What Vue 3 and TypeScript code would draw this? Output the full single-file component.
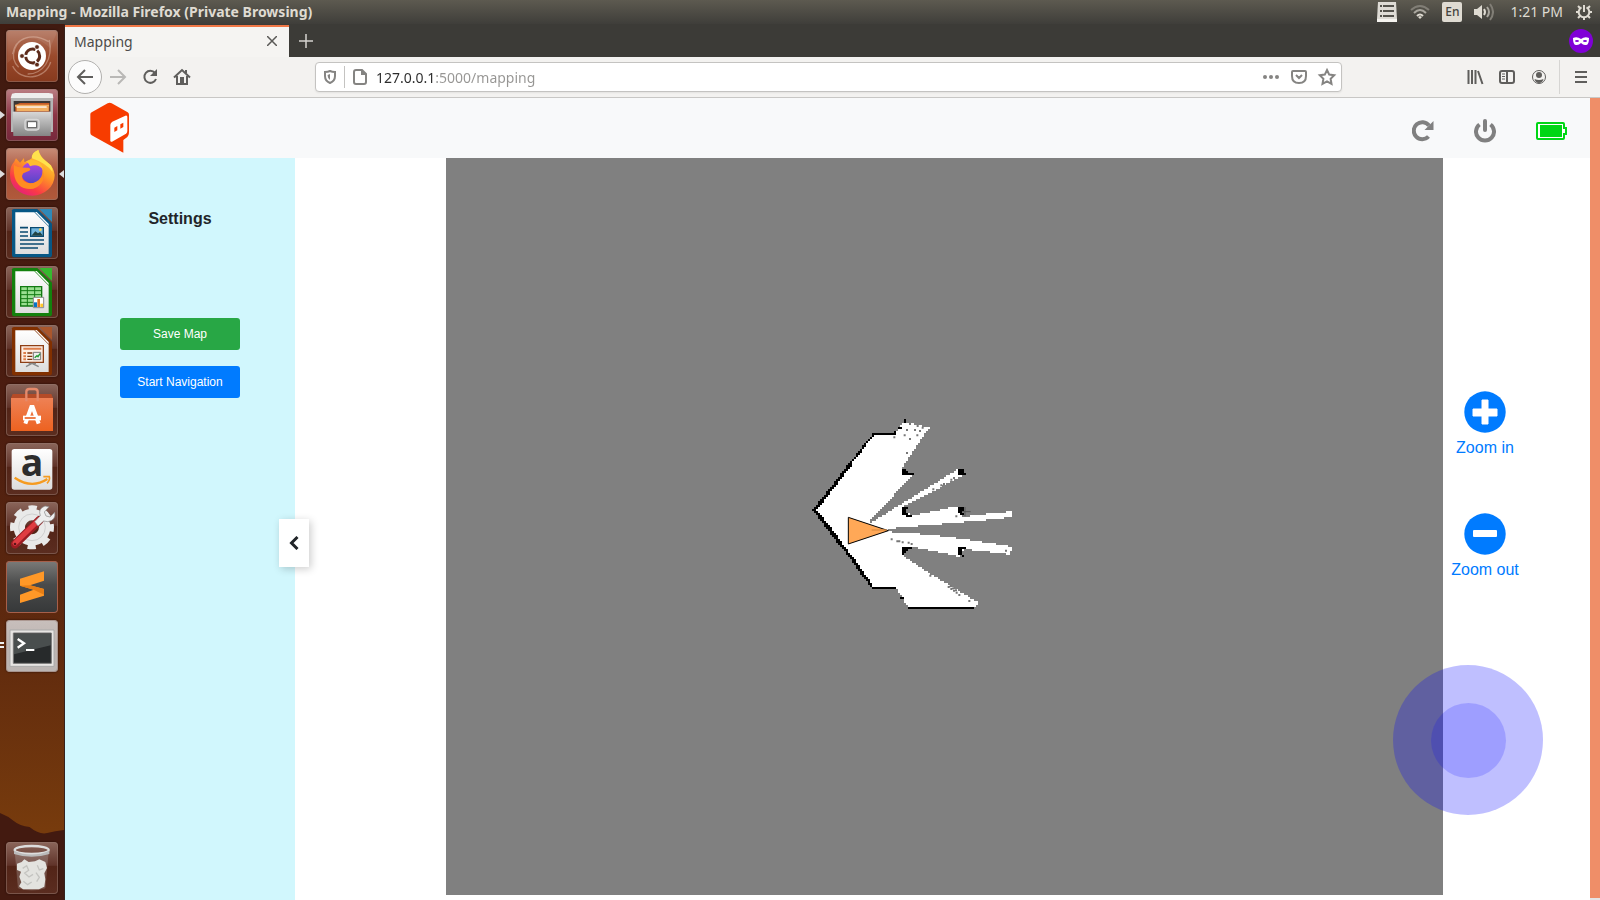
<script setup lang="ts">
import { ref } from 'vue'

type Point = [number, number]

const address = ref('127.0.0.1:5000/mapping')

/* Occupancy grid: survey outlines are sampled into square cells. */
const CELL = 6
const COLS = 115
const ROWS = 108

const free: Point[][] = [
  [[40, 315], [222, 88], [285, 88], [310, 50], [388, 68], [303, 192], [318, 208], [336, 212], [208, 350], [215, 352], [475, 192], [495, 208],
   [305, 308], [335, 333], [475, 303], [492, 325], [480, 337], [545, 328], [637, 319], [637, 336], [570, 344], [265, 371], [262, 380], [400, 390], [490, 402], [637, 425],
   [628, 451], [612, 446], [493, 432], [480, 456], [420, 442], [330, 424], [306, 450], [380, 500], [537, 594],
   [520, 608], [325, 608], [287, 547], [220, 547]],
]

const walls: Point[][] = [
  [[41, 315], [100, 240], [148, 178], [178, 142], [203, 108], [224, 86], [283, 86]],
  [[47, 312], [104, 240], [150, 182]],
  [[41, 315], [98, 388], [148, 452], [198, 522], [218, 547], [285, 547]],
  [[48, 318], [104, 388], [154, 456], [204, 526]],
  [[326, 609], [520, 609]],
  [[296, 68], [302, 68]], [[312, 46], [316, 50]], [[282, 80], [286, 86]],
  [[306, 192], [306, 206], [340, 208]], [[312, 194], [324, 204]], [[312, 200], [318, 202]],
  [[476, 192], [476, 204]], [[482, 192], [482, 204]], [[486, 196], [488, 202], [494, 208]],
  [[306, 310], [306, 322], [316, 328], [334, 334]], [[312, 310], [318, 306]], [[312, 314], [312, 324], [324, 330]],
  [[476, 306], [490, 306]], [[482, 306], [482, 324]], [[476, 320], [488, 328]], [[476, 312], [488, 316]],
  [[306, 448], [306, 430], [332, 426]], [[312, 438], [312, 430], [320, 432]],
  [[478, 444], [478, 430], [494, 426]], [[482, 432], [482, 444], [488, 455]],
  [[304, 576], [306, 578]],
]

const specks: Point[] = [
  [330, 57], [353, 63], [368, 68], [321, 75], [345, 75], [360, 78], [314, 91], [352, 91], [330, 102], [283, 97],
  [321, 144], [400, 253], [424, 241], [432, 237], [454, 224], [462, 219], [469, 334], [275, 403], [292, 409],
  [298, 409], [308, 412], [326, 413], [335, 417], [618, 437], [391, 512], [446, 546], [454, 552], [462, 557], [470, 563], [478, 570], [452, 544],
  [460, 550], [468, 556], [508, 588],
]

function inside(x: number, y: number, poly: Point[]): boolean {
  let hit = false
  for (let i = 0, j = poly.length - 1; i < poly.length; j = i++) {
    const [xi, yi] = poly[i]
    const [xj, yj] = poly[j]
    if (yi > y !== yj > y && x < ((xj - xi) * (y - yi)) / (yj - yi) + xi) hit = !hit
  }
  return hit
}

function freePath(): string {
  let d = ''
  for (let r = 0; r < ROWS; r++) {
    let start = -1
    for (let c = 0; c <= COLS; c++) {
      const on = c < COLS && free.some((p) => inside((c + 0.5) * CELL, (r + 0.5) * CELL, p))
      if (on && start < 0) start = c
      if (!on && start >= 0) {
        d += `M${start * CELL} ${r * CELL}h${(c - start) * CELL}v${CELL}h${(start - c) * CELL}z`
        start = -1
      }
    }
  }
  return d
}

function wallPath(): string {
  const cells = new Set<string>()
  for (const line of walls) {
    for (let i = 1; i < line.length; i++) {
      const [x0, y0] = line[i - 1]
      const [x1, y1] = line[i]
      const n = Math.max(1, Math.ceil(Math.max(Math.abs(x1 - x0), Math.abs(y1 - y0)) / 3))
      for (let k = 0; k <= n; k++) {
        const c = Math.floor((x0 + ((x1 - x0) * k) / n) / CELL)
        const r = Math.floor((y0 + ((y1 - y0) * k) / n) / CELL)
        cells.add(`M${c * CELL} ${r * CELL}h${CELL}v${CELL}h-${CELL}z`)
      }
    }
  }
  return [...cells].join('')
}

const freeCells = freePath()
const wallCells = wallPath()
const speckCells = specks.map(([x, y]) => `M${x - 3} ${y - 3}h6v6h-6z`).join('')

const dock = [
  { id: 'dash', label: 'Search your computer' },
  { id: 'files', label: 'Files', running: 1 },
  { id: 'firefox', label: 'Firefox', running: 1, focused: true },
  { id: 'writer', label: 'LibreOffice Writer' },
  { id: 'calc', label: 'LibreOffice Calc' },
  { id: 'impress', label: 'LibreOffice Impress' },
  { id: 'software', label: 'Ubuntu Software' },
  { id: 'amazon', label: 'Amazon' },
  { id: 'system', label: 'System Settings' },
  { id: 'sublime', label: 'Sublime Text' },
  { id: 'terminal', label: 'Terminal', running: 2 },
  { id: 'trash', label: 'Trash' },
]
</script>

<template>
  <div class="desktop">
    <header class="panel">
      <span class="panel-title">Mapping - Mozilla Firefox (Private Browsing)</span>
      <div class="tray">
        <svg width="22" height="20" viewBox="0 0 22 20"><path d="M2 0h18l1 17v3H1v-3z" fill="#dedbd5" /><path d="M1 17h20v3H1z" fill="#f5f3ef" /><path d="M4 4h2M7 4h11M4 9h2M7 9h11M4 14h2M7 14h11" stroke="#54524c" stroke-width="2" /></svg>
        <svg class="wifi" width="20" height="16" viewBox="0 0 20 16" fill="none" stroke-width="2"><path d="M1 6q9-8 18 0" stroke="#817e76" /><path d="M4 9q6-6 12 0" stroke="#aaa79f" /><path d="M7 12q3-3 6 0" stroke="#dfdbd2" /><path d="m8 13 2 2 2-2-2-1z" fill="#dfdbd2" /></svg>
        <span class="lang">En</span>
        <svg class="vol" width="20" height="18" viewBox="0 0 20 18" fill="none"><path d="M0 6h3l5-4v14l-5-4H0z" fill="#dfdbd2" /><path d="M10 6q2 3 0 6" stroke="#dfdbd2" stroke-width="2" /><path d="M13 4q4 5 0 10" stroke="#aaa79f" stroke-width="2" /><path d="M16 1q6 8 0 16" stroke="#817e76" stroke-width="2" /></svg>
        <time class="clock">1:21 PM</time>
        <svg width="16" height="16" viewBox="0 0 16 16" fill="none" stroke="#dfdbd2"><path d="M5.500 3.300A5.300 5.300 0 1 0 10.500 3.300M8 1v7" stroke-width="2" /><path d="M2 2l2.500 2.500M14 2l-2.500 2.500M0 8h3M13 8h3M2 14l2.500-2.500M14 14l-2.500-2.500M8 13v3" stroke-width="2" /></svg>
      </div>
    </header>

    <div class="workspace">
      <nav class="dock" aria-label="Launcher">
        <svg class="hill" viewBox="0 0 65 90" preserveAspectRatio="none"><path d="M0 3Q8 6 14 11T30 17Q40 25 48 23T65 20V90H0z" fill="#431a10" /></svg>
        <button v-for="app in dock" :key="app.id" type="button" class="app" :class="app.id" :aria-label="app.label">
          <i v-if="app.running === 1" class="pip"></i>
          <template v-if="app.running === 2"><i class="bar up"></i><i class="bar down"></i></template>
          <i v-if="app.focused" class="pip-right"></i>
          <svg width="52" height="52" viewBox="0 0 156 156">
            <g v-if="app.id === 'dash'">
              <g fill="none" stroke="#e6c5b4" stroke-width="4" opacity=".45"><path d="M20 72C28 25 78 5 128 35M130 30C142 90 110 132 65 132M38 112C5 80 30 28 65 22M20 108C42 156 118 150 134 96" /></g>
              <path d="M20 85C18 35 75-5 132 55L152 10V0H4v100z" fill="#fff" opacity=".08" />
              <circle cx="78" cy="78" r="42" fill="#fff" />
              <circle cx="80" cy="78" r="21" fill="none" stroke="#5d2b1b" stroke-width="9" stroke-dasharray="38 6" stroke-dashoffset="-25" />
              <g fill="#5d2b1b" stroke="#fff" stroke-width="2"><circle cx="48" cy="78" r="7" /><circle cx="93" cy="51" r="7" /><circle cx="93" cy="104" r="7" /></g>
            </g>
            <g v-else-if="app.id === 'files'">
              <path d="m18 14 10-2h100l12 2 2 14H14z" fill="#eee" /><path d="M15 27h126v102H15z" fill="#b5b5b5" />
              <path d="M23 36h110v32H23z" fill="#3c3735" /><path d="M28 48l14-6h88v26H28z" fill="#c85d26" /><path d="M27 47h102v6H27zM32 54h96v12H32z" fill="#f2b062" /><path d="M32 54h90" stroke="#fff" stroke-width="4" />
              <path d="M20 68h116l-2 73H22z" fill="url(#steel)" /><rect x="57" y="91" width="42" height="32" rx="8" fill="#b9b9b9" stroke="#d8d8d8" stroke-width="4" /><path d="M64 98h28v18H64z" fill="#fff" stroke="#555" stroke-width="3" />
            </g>
            <g v-else-if="app.id === 'firefox'">
              <path d="M12 78Q12 54 24 42L30 31 42 44 54 30 55 42Q68 39 77 31 77 15 97 6q5 20 22 32 26 20 27 43a67 62 0 0 1-134 0z" fill="url(#fox)" />
              <path d="M78 31Q76 13 97 6q5 21 22 33l16 13q5 8 5 20-21-27-62-41" fill="#ffe24d" />
              <circle cx="78" cy="74" r="32" fill="url(#globe)" />
              <path d="M24 50q8 10 44 9 10 4 0 10l-16 7q-9 12 2 23 17 13 36 2 20-10 20-33 9 20-4 38-20 25-53 14-34-15-29-70" fill="#ff8c22" />
              <path d="M60 40q16-8 32 0 15 4 19 23-18-18-39-8-4-9-12-15" fill="#ffbc30" />
            </g>
            <g v-else-if="['writer', 'calc', 'impress'].includes(app.id)">
              <path d="M18 10Q18 6 26 6h68l44 44v93q0 8-8 8H26q-8 0-8-8z" :fill="app.id === 'writer' ? '#075785' : app.id === 'calc' ? '#13810d' : '#823000'" />
              <path d="M100 6h38v39z" :fill="app.id === 'writer' ? '#2f89b8' : app.id === 'calc' ? '#36b92f' : '#aa562c'" />
              <path d="M28 16h57l43 43v82H28z" fill="url(#paper)" /><path d="m87 15 41 42v-6L92 15z" fill="#fff" />
              <g v-if="app.id === 'writer'"><path d="M42 62h24M42 75h24M42 87h24M42 99h72M42 111h72M42 123h54" stroke="#0a4a70" stroke-width="5" /><path d="M74 62h38v26H74z" fill="#73b7de" stroke="#0a4a70" stroke-width="4" /><path d="m76 86 12-13 8 6 6-4 9 11z" fill="#244" /><circle cx="103" cy="68" r="4" fill="#ffd84e" /></g>
              <g v-else-if="app.id === 'calc'"><path d="M44 62h63v58H44z" fill="#9adf91" stroke="#127a12" stroke-width="4" /><path d="M44 74h63M44 86h63M44 98h63M44 109h63M64 62v58M86 62v58" stroke="#127a12" stroke-width="3" /><path d="M82 94h31v31H82z" fill="#fff" stroke="#888" stroke-width="3" /><path d="M84 109h9v14h-9z" fill="#0874c7" /><path d="M94 99h8v24h-8z" fill="#e47220" /><path d="M103 113h8v10h-8z" fill="#ffc82b" /></g>
              <g v-else><path d="M44 62h68v50H44z" fill="#fdeee4" stroke="#8e3e15" stroke-width="4" /><path d="M52 71h54M52 84h8M52 94h8M52 103h8" stroke="#dd7e4b" stroke-width="6" /><path d="M64 84h15M64 94h15M64 103h15" stroke="#7d350e" stroke-width="4" /><path d="M82 82h22v22H82z" fill="#eee" stroke="#777" stroke-width="3" /><path d="m86 98 7-6 3 3 6-9" stroke="#219a31" stroke-width="4" fill="none" /><path d="m60 125 18-10 20 10M68 115h22" stroke="#888" stroke-width="4" fill="none" /></g>
            </g>
            <g v-else-if="app.id === 'software'">
              <path d="m15 42 5-12h116l5 12z" fill="#b44b27" /><path d="M15 42h126v99H15z" fill="url(#bag)" />
              <path d="M61 52V23q0-8 9-8h16q9 0 9 8v29" fill="none" stroke="#e58a6b" stroke-width="7" />
              <path d="M58 119 76 69h4l18 50" fill="none" stroke="#fff" stroke-width="12" /><path d="M51 95h54v14H51z" fill="#fff" /><path d="M56 102h33" stroke="#eb652a" stroke-width="5" />
            </g>
            <g v-else-if="app.id === 'amazon'">
              <rect x="17" y="18" width="122" height="122" rx="8" fill="url(#paper)" />
              <text x="78" y="100" text-anchor="middle" font-family="Open Sans, sans-serif" font-size="112" font-weight="700" fill="#2d2d2d">a</text>
              <path d="M26 104q51 35 98 4" fill="none" stroke="#f59b20" stroke-width="7" /><path d="M112 101h18q3 9-7 20" fill="none" stroke="#f59b20" stroke-width="5" />
            </g>
            <g v-else-if="app.id === 'system'">
              <circle cx="78" cy="76" r="38" fill="none" stroke="#e9e9e9" stroke-width="34" /><circle cx="78" cy="76" r="59" fill="none" stroke="#e9e9e9" stroke-width="14" stroke-dasharray="25 21.300" stroke-dashoffset="12" />
              <circle cx="78" cy="76" r="40" fill="none" stroke="#d0d0d0" stroke-width="3" />
              <path d="M27 127 101 54" stroke="#9b1c22" stroke-width="25" stroke-linecap="round" /><path d="M27 124 99 53" stroke="#df3d42" stroke-width="15" stroke-linecap="round" />
              <path d="m86 59 17-18q-8-21 14-29l12 2-14 16 5 12 12 3 14-14q5 24-21 28l-12-2-17 15z" fill="#eee" stroke="#888" stroke-width="2" /><circle cx="27" cy="126" r="4" fill="#5b1519" />
            </g>
            <g v-else-if="app.id === 'sublime'">
              <path d="m42 53 72-22v28L72 73l42 11v20l-72 22v-25l41-15-41-12z" fill="#ff9827" /><path d="m42 74 30-1 42 11v17l-31-15z" fill="#e77e15" />
            </g>
            <g v-else-if="app.id === 'terminal'">
              <path d="M12 30h132v109H12z" fill="#e7e5e3" stroke="#aaa" stroke-width="3" /><path d="M22 39h114v91H22z" fill="#272a2b" stroke="#777" stroke-width="3" /><path d="M24 41h110v35L24 103z" fill="#73797a" opacity=".45" />
              <path d="m35 57 19 13-19 13" fill="none" stroke="#fff" stroke-width="7" /><path d="M60 90h25" stroke="#fff" stroke-width="6" />
            </g>
            <g v-else>
              <path d="m28 35 9 103q42 12 80 0l9-103" fill="#ccc" opacity=".25" stroke="#ddd" stroke-width="2" />
              <path d="m33 65 14-5 8-8 13 8 19-2 13-6 18 8 5 18-8 16 3 18-3 22-16 8H51l-12-9 7-12-6-17 5-15-12-5z" fill="#e3e3df" /><path d="m50 79 12-8 6 14-12 8 13 12 12-8M94 70l6 14 12-4M90 92l10 14-8 13M52 118l13 10 12-8" fill="none" stroke="#c4c4c0" stroke-width="4" />
              <ellipse cx="77" cy="24" rx="51" ry="12" fill="none" stroke="#ddd" stroke-width="7" /><path d="M24 26q52 23 106 0v10q-53 17-106 0z" fill="#bbb" />
            </g>
          </svg>
        </button>
        <svg width="0" height="0" class="defs"><defs>
          <linearGradient id="steel" x2="0" y2="1"><stop stop-color="#d8d8d8" /><stop offset="1" stop-color="#858585" /></linearGradient>
          <linearGradient id="paper" x2="0" y2="1"><stop stop-color="#fff" /><stop offset="1" stop-color="#ddd" /></linearGradient>
          <linearGradient id="bag" x2="0" y2="1"><stop stop-color="#ee8155" /><stop offset="1" stop-color="#ed6220" /></linearGradient>
          <linearGradient id="fox" x1=".9" y1="0" x2=".3" y2="1"><stop stop-color="#ffe544" /><stop offset=".45" stop-color="#ff9b25" /><stop offset=".8" stop-color="#fa3b45" /><stop offset="1" stop-color="#e5207a" /></linearGradient>
          <linearGradient id="globe" x2="0" y2="1"><stop stop-color="#b347de" /><stop offset="1" stop-color="#5546c8" /></linearGradient>
        </defs></svg>
      </nav>

      <section class="browser">
        <div class="tabs">
          <div class="tab"><span>Mapping</span><button type="button" aria-label="Close tab"><svg width="10" height="10" viewBox="0 0 10 10"><path d="m0 0 10 10M10 0 0 10" stroke="#5a5957" stroke-width="1.500" /></svg></button></div>
          <button type="button" class="plus" aria-label="New tab"><svg width="14" height="14" viewBox="0 0 14 14"><path d="M7 0v14M0 7h14" stroke="#d5d3cf" stroke-width="1.500" /></svg></button>
          <svg class="mask" width="24" height="24" viewBox="0 0 24 24"><circle cx="12" cy="12" r="12" fill="#8000d7" /><path d="M4 9q4-2 8 1 4-3 8-1 0 8-4 7-2 0-4-2-2 2-4 2-4 1-4-7z" fill="#fff" /><ellipse cx="8" cy="12" rx="2" ry="1" fill="#8000d7" /><ellipse cx="16" cy="12" rx="2" ry="1" fill="#8000d7" /></svg>
        </div>

        <div class="toolbar">
          <button type="button" class="back" aria-label="Back"><svg width="16" height="16" viewBox="0 0 16 16"><path d="M16 8H2M8 1 1 8l7 7" /></svg></button>
          <button type="button" class="faint" aria-label="Forward"><svg width="16" height="16" viewBox="0 0 16 16"><path d="M0 8h14M8 1l7 7-7 7" /></svg></button>
          <button type="button" aria-label="Reload"><svg width="16" height="16" viewBox="0 0 16 16"><path d="M13 4A6 6 0 1 0 14 10" /><path class="solid" d="M15 0v7H8z" /></svg></button>
          <button type="button" aria-label="Home"><svg width="16" height="16" viewBox="0 0 16 16"><path d="M0 8.500 8 1l8 7.500M3 7v8h10V7M12 1v3" /><path class="solid" d="M6 8h4v7H6z" /></svg></button>
          <div class="url">
            <svg width="12" height="14" viewBox="0 0 12 14"><path d="M6 1q2 1 5 1v4q0 5-5 7-5-2-5-7V2q3 0 5-1z" /><path class="solid" d="M6 4v6Q3.500 8 3.500 5z" /></svg>
            <i></i>
            <svg width="14" height="16" viewBox="0 0 14 16"><path d="M9 1H3Q1 1 1 3v10q0 2 2 2h8q2 0 2-2V5zv4h4" /></svg>
            <input v-model="address" type="text" aria-label="Address" spellcheck="false" />
            <button type="button" aria-label="Page actions"><svg width="16" height="16" viewBox="0 0 16 16"><g class="solid"><circle cx="2" cy="8" r="2" /><circle cx="8" cy="8" r="2" /><circle cx="14" cy="8" r="2" /></g></svg></button>
            <button type="button" aria-label="Save to Pocket"><svg width="16" height="16" viewBox="0 0 16 16"><path d="M2 2h12q1 0 1 1v4q0 7-7 7T1 7V3q0-1 1-1zM5 6l3 3 3-3" /></svg></button>
            <button type="button" aria-label="Bookmark"><svg width="16" height="16" viewBox="0 0 16 16"><path d="m8 1 2.200 4.600 5 .7-3.600 3.500.9 5L8 12.400 3.500 14.800l.9-5L.8 6.300l5-.7z" /></svg></button>
          </div>
          <div class="tools">
            <button type="button" aria-label="Library"><svg width="16" height="16" viewBox="0 0 16 16"><path d="M1.500 1v14M5 1v14M8.500 1v14M11 2l4.500 13" /></svg></button>
            <button type="button" aria-label="Sidebars"><svg width="16" height="16" viewBox="0 0 16 16"><rect x="1" y="2" width="14" height="12" rx="2" /><path d="M8 2v12" /><path class="thin" d="M3 5h3M3 7.500h3M3 10h3" /></svg></button>
            <button type="button" aria-label="Account"><svg width="16" height="16" viewBox="0 0 16 16"><circle class="thin" cx="8" cy="8" r="6.500" /><circle class="solid" cx="8" cy="6" r="3" /><path class="solid" d="M3.500 10q4.500 2 9 0-1 4-4.500 4t-4.500-4z" /></svg></button>
            <button type="button" class="menu" aria-label="Menu"><svg width="12" height="12" viewBox="0 0 12 12"><path d="M0 1h12M0 6h12M0 11h12" /></svg></button>
          </div>
        </div>

        <div class="page">
          <div class="app-page">
            <header class="app-bar">
              <a href="#" class="brand" aria-label="Home"><svg width="39" height="51" viewBox="0 0 117 153"><path d="M59 2q3 0 6 2l48 27q4 3 4 7v52q0 12-9 18l-8 6v38L5 100q-4-3-4-8V37q0-4 4-6L53 4q3-2 6-2z" fill="#f73c00" /><path d="m67 59 39-18q6-2 6 4v42q0 5-4 8l-42 24q-5 2-5-4V69q0-6 6-10z" fill="#fff" /><path d="m73 77 9-5v13l-9 5zM91 67l9-5v13l-9 5z" fill="#f73c00" /></svg></a>
              <div class="app-actions">
                <button type="button" aria-label="Refresh"><svg width="22" height="22" viewBox="0 0 22 22"><path d="M16.500 16.500A8.500 8.500 0 1 1 17 5.500" fill="none" stroke="#808080" stroke-width="4" /><path d="M21.500 1v9h-9z" fill="#808080" /></svg></button>
                <button type="button" aria-label="Power"><svg width="22" height="24" viewBox="0 0 22 24"><path d="M5.500 5.500A9 9 0 1 0 16.500 5.500" fill="none" stroke="#808080" stroke-width="4" /><path d="M11 2v9" stroke="#808080" stroke-width="4" stroke-linecap="round" /></svg></button>
                <svg class="battery" width="32" height="18" viewBox="0 0 32 18"><path d="M2 1h25q1 0 1 1v4h2v6h-2v4q0 1-1 1H2q-1 0-1-1V2q0-1 1-1z" fill="#fff" stroke="#00d615" stroke-width="2" /><path d="M4 3h22v12H4z" fill="#00d615" /></svg>
              </div>
            </header>

            <div class="content">
              <aside class="sidebar">
                <h1>Settings</h1>
                <button type="button" class="btn save">Save Map</button>
                <button type="button" class="btn start">Start Navigation</button>
                <button type="button" class="toggle" aria-label="Collapse settings"><svg width="10" height="14" viewBox="0 0 10 14"><path d="M8.500 1 2.500 7l6 6" fill="none" stroke="#212529" stroke-width="3" /></svg></button>
              </aside>
              <main class="stage">
                <svg class="map" viewBox="0 0 997 737" role="img" aria-label="Scanned map">
                  <rect width="997" height="737" fill="#808080" />
                  <g transform="translate(354 247) scale(.3333333)">
                    <path :d="freeCells" fill="#fff" shape-rendering="crispEdges" />
                    <path d="M495 306v28M480 320h32" stroke="#555" stroke-width="3" />
                    <path :d="speckCells" fill="#777" />
                    <path :d="wallCells" fill="#000" shape-rendering="crispEdges" />
                    <path d="M145 337v80l120-40z" fill="#ffa857" stroke="#000" stroke-width="3" /><path d="M215 373h45v4h-45z" fill="#df8d42" />
                  </g>
                </svg>
                <div class="zoom">
                  <button type="button"><svg width="42" height="42" viewBox="0 0 42 42"><circle cx="21" cy="21" r="20.700" fill="#007bff" /><path d="M18 9h6v9h9v7h-9v8h-6v-8H9v-7h9z" fill="#fff" stroke="#fff" stroke-linejoin="round" /></svg><span>Zoom in</span></button>
                  <button type="button"><svg width="42" height="42" viewBox="0 0 42 42"><circle cx="21" cy="21" r="20.700" fill="#007bff" /><rect x="9" y="17" width="24" height="7" rx="1" fill="#fff" /></svg><span>Zoom out</span></button>
                </div>
                <div class="joystick"><div class="knob"></div></div>
              </main>
            </div>
          </div>
          <div class="scrollbar"></div>
        </div>
      </section>
    </div>
  </div>
</template>

<style>
body { margin: 0; }
</style>

<style scoped>
* { box-sizing: border-box; }
button { border: 0; padding: 0; margin: 0; background: none; font: inherit; color: inherit; cursor: pointer; display: flex; align-items: center; justify-content: center; }
svg { display: block; flex: none; }
.desktop { min-height: 100vh; display: flex; flex-direction: column; font-family: "Noto Sans", "Open Sans", sans-serif; }
.panel { height: 24px; display: flex; align-items: center; justify-content: space-between; padding: 0 8px 0 6px; color: #dfdbd2; background: linear-gradient(#5d5a50, #3f3e3a); }
.panel-title { font-size: 14px; font-weight: 700; line-height: 24px; }
.tray { display: flex; align-items: center; gap: 12px; font-size: 14px; }
.lang { width: 20px; height: 20px; border-radius: 2px; background: #dfdbd2; color: #45433e; font-size: 12px; font-weight: 500; line-height: 20px; text-align: center; }
.clock { padding: 0 1px 0 4px; line-height: 24px; }
.workspace { flex: 1; display: flex; }

.dock { position: relative; width: 65px; flex: none; display: flex; flex-direction: column; gap: 7px; padding: 6px; background: linear-gradient(#401a10, #4c1d10 45%, #612b0e 72%, #773b0d 92%); border-right: 1px solid #36221d; }
.hill { position: absolute; left: 0; bottom: 0; width: 100%; height: 90px; }
.app { position: relative; width: 52px; height: 52px; border-radius: 4px; background: linear-gradient(#8b665b, #603329 45%, #522417 46%, #5b2d20); box-shadow: inset 0 0 0 1px #95766c88, 0 0 2px #200a05; }
.app.dash { background: linear-gradient(#b37660, #9a4a2c 50%, #873a1e); }
.files { background: linear-gradient(#bb7f84, #8c3545 50%, #76283c); }
.firefox { background: linear-gradient(#c88d78, #a74f36 50%, #b15a3b); }
.sublime { background: linear-gradient(#7b7b79, #4a4b4b 45%, #363839); box-shadow: inset 0 0 0 1px #a65f4a; }
.terminal { background: linear-gradient(#c8bfbc, #bcb3b0 50%, #bbb5b3); }
.trash { margin-top: auto; }
.pip { position: absolute; left: -6px; top: 22px; border: solid transparent; border-width: 4px 0 4px 5px; border-left-color: #ddd; }
.pip-right { position: absolute; right: -6px; top: 22px; border: solid transparent; border-width: 4px 5px 4px 0; border-right-color: #ddd; }
.bar { position: absolute; left: -6px; width: 4px; height: 2px; background: #eee; }
.up { top: 22px; }
.down { top: 26px; }
.defs { position: absolute; }

.browser { flex: 1; min-width: 0; display: flex; flex-direction: column; }
.tabs { height: 33px; display: flex; align-items: stretch; background: #3c3b37; padding-right: 7px; }
.tab { width: 224px; display: flex; align-items: center; justify-content: space-between; padding: 0 12px 2px 9px; border-top: 2px solid #f07746; background: #f5f4f2; color: #4c4b49; font-size: 14px; margin-top: 1px; }
.plus { width: 34px; }
.mask { margin: 5px 0 0 auto; }
.toolbar { height: 41px; display: flex; align-items: center; background: #f3f2f0; border-bottom: 1px solid #c8c7c5; padding: 0 13px 0 3px; gap: 16px; color: #5f5e5c; }
.toolbar svg { fill: none; stroke: currentColor; stroke-width: 2; overflow: visible; }
.toolbar .solid { fill: currentColor; stroke: none; }
.toolbar .thin { stroke-width: 1; }
.back { width: 34px; height: 34px; border: 1px solid #b1b0ae; border-radius: 50%; background: #fcfcfc; margin-right: -8px; }
.faint { color: #b9b8b6; }
.url { flex: 1; height: 30px; margin-left: 109px; margin-right: 109px; padding: 0 6px 0 8px; border: 1px solid #c4c3c1; border-radius: 4px; background: #fff; box-shadow: 0 1px 2px #0001; display: flex; align-items: center; gap: 8px; color: #858482; }
.url i { width: 1px; height: 22px; background: #c4c3c1; }
.url button + button { margin-left: 4px; }
.url input { flex: 1; min-width: 0; height: 28px; border: 0; padding: 0 0 0 1px; outline: 0; font: 14px "Noto Sans", sans-serif; color: transparent; background: linear-gradient(90deg, #2b2b2b 60px, #969593 60px); -webkit-background-clip: text; background-clip: text; }
.tools { display: flex; align-items: center; gap: 16px; }
.menu { height: 34px; padding-left: 15px; margin-left: -4px; border-left: 1px solid #d6d5d3; }

.page { flex: 1; display: flex; }
.scrollbar { width: 10px; background: #ef8e68; border-bottom: 2px solid #e5e5e5; }
.app-page { flex: 1; min-width: 0; display: flex; flex-direction: column; background: #fff; font-family: "Liberation Sans", Arial, sans-serif; color: #212529; }
.app-bar { height: 60px; display: flex; align-items: center; justify-content: space-between; padding: 0 22px 0 25px; background: #f8f9fa; }
.brand { padding-bottom: 2px; }
.app-actions { display: flex; align-items: center; gap: 40px; padding-top: 6px; }
.content { flex: 1; display: flex; }
.sidebar { position: relative; width: 230px; flex: none; display: flex; flex-direction: column; align-items: center; gap: 16px; padding-top: 49px; background: #d1f7fd; }
h1 { margin: 0 0 71px; font-size: 16px; line-height: 24px; font-weight: 700; }
.btn { width: 120px; height: 32px; border-radius: 3px; font-size: 12px; color: #fff; }
.save { background: #28a745; }
.start { background: #007bff; }
.toggle { position: absolute; right: -14px; top: 361px; width: 30px; height: 48px; background: #fff; box-shadow: 2px 2px 8px #0003; z-index: 1; }
.stage { position: relative; flex: 1; min-width: 0; display: grid; grid-template-columns: minmax(0, 1fr) 147px; padding-left: 151px; align-items: start; }
.map { width: 100%; height: auto; }
.zoom { width: 84px; display: flex; flex-direction: column; gap: 53px; padding-top: 233px; color: #007bff; font-size: 16px; line-height: 24px; }
.zoom button { flex-direction: column; gap: 3px; }
.joystick { position: absolute; right: 47px; bottom: 85px; width: 150px; height: 150px; border-radius: 50%; background: #0000ff40; display: grid; place-items: center; }
.knob { width: 75px; height: 75px; border-radius: 50%; background: #0000ff2b; }
</style>
